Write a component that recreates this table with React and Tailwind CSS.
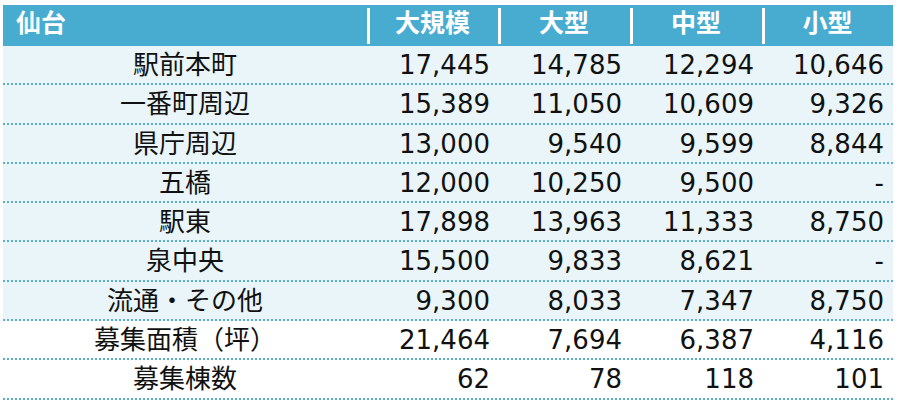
import React from "react";

const rows = [
  { name: "駅前本町", v: ["17,445", "14,785", "12,294", "10,646"], tint: true },
  { name: "一番町周辺", v: ["15,389", "11,050", "10,609", "9,326"], tint: true },
  { name: "県庁周辺", v: ["13,000", "9,540", "9,599", "8,844"], tint: true },
  { name: "五橋", v: ["12,000", "10,250", "9,500", "-"], tint: true },
  { name: "駅東", v: ["17,898", "13,963", "11,333", "8,750"], tint: true },
  { name: "泉中央", v: ["15,500", "9,833", "8,621", "-"], tint: true },
  { name: "流通・その他", v: ["9,300", "8,033", "7,347", "8,750"], tint: true },
  { name: "募集面積（坪）", v: ["21,464", "7,694", "6,387", "4,116"], tint: false },
  { name: "募集棟数", v: ["62", "78", "118", "101"], tint: false },
];

const heads = ["大規模", "大型", "中型", "小型"];

const font = {
  fontFamily: '"DejaVu Sans", "Noto Sans CJK JP", sans-serif',
};

const App = () => {
  return (
    <div className="w-[900px] h-[409px] bg-white pt-[5px] pl-[3px]" style={font}>
      <div className="w-[890px]">
        {/* Header */}
        <div className="grid grid-cols-[364px_131px_132px_132px_131px] h-[41px] bg-[#48acd0] text-white font-bold text-[25px]">
          <div className="flex items-center pl-[13px] pb-[4px]">仙台</div>
          {heads.map((h) => (
            <div key={h} className="relative flex items-center justify-center pb-[4px]">
              <div className="absolute left-0 top-[3px] bottom-[3px] w-[3px] bg-white" />
              {h}
            </div>
          ))}
        </div>

        {/* Body */}
        {rows.map((r) => (
          <div
            key={r.name}
            className={`grid grid-cols-[364px_131px_132px_132px_131px] h-[39.3px] border-b-2 border-dotted border-[#5aaec8] text-[26px] text-[#111] ${
              r.tint ? "bg-[#e9f5f9]" : "bg-white"
            }`}
          >
            <div className="flex items-center justify-center">{r.name}</div>
            {r.v.map((x, i) => (
              <div
                key={i}
                className={`flex items-center justify-end ${i === 3 ? "pr-[9px]" : "pr-[8px]"}`}
              >
                {x}
              </div>
            ))}
          </div>
        ))}
      </div>
    </div>
  );
};

export default App;
